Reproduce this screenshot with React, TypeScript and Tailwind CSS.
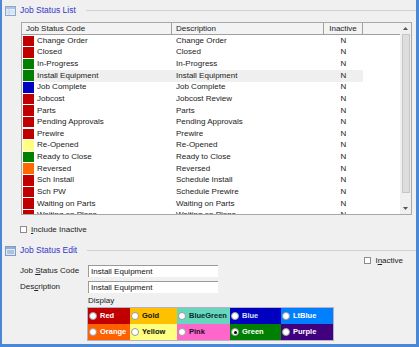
import React from "react";

type Row = { code: string; desc: string; color: string };

const rows: Row[] = [
  { code: "Change Order", desc: "Change Order", color: "bg-[#c00000]" },
  { code: "Closed", desc: "Closed", color: "bg-[#c00000]" },
  { code: "In-Progress", desc: "In-Progress", color: "bg-[#008000]" },
  { code: "Install Equipment", desc: "Install Equipment", color: "bg-[#008000]" },
  { code: "Job Complete", desc: "Job Complete", color: "bg-[#0000c0]" },
  { code: "Jobcost", desc: "Jobcost Review", color: "bg-[#c00000]" },
  { code: "Parts", desc: "Parts", color: "bg-[#c00000]" },
  { code: "Pending Approvals", desc: "Pending Approvals", color: "bg-[#c00000]" },
  { code: "Prewire", desc: "Prewire", color: "bg-[#c00000]" },
  { code: "Re-Opened", desc: "Re-Opened", color: "bg-[#ffff80]" },
  { code: "Ready to Close", desc: "Ready to Close", color: "bg-[#008000]" },
  { code: "Reversed", desc: "Reversed", color: "bg-[#ff6a00]" },
  { code: "Sch Install", desc: "Schedule Install", color: "bg-[#c00000]" },
  { code: "Sch PW", desc: "Schedule Prewire", color: "bg-[#c00000]" },
  { code: "Waiting on Parts", desc: "Waiting on Parts", color: "bg-[#c00000]" },
  { code: "Waiting on Plans", desc: "Waiting on Plans", color: "bg-[#c00000]" },
];

const swatches = [
  [
    { label: "Red", cls: "bg-[#c00000] text-white w-[42px]" },
    { label: "Gold", cls: "bg-[#ffc000] text-[#111] w-[47px]" },
    { label: "BlueGreen", cls: "bg-[#66d6bc] text-[#0a2a2a] w-[53px]" },
    { label: "Blue", cls: "bg-[#0000c0] text-[#d8e0ff] w-[51px]" },
    { label: "LtBlue", cls: "bg-[#0080ff] text-white w-[52px]" },
  ],
  [
    { label: "Orange", cls: "bg-[#ff6000] text-white w-[42px]" },
    { label: "Yellow", cls: "bg-[#ffff80] text-[#111] w-[47px]" },
    { label: "Pink", cls: "bg-[#ff66cc] text-[#111] w-[53px]" },
    { label: "Green", cls: "bg-[#008000] text-white w-[51px]", checked: true },
    { label: "Purple", cls: "bg-[#400080] text-white w-[52px]" },
  ],
];

function ListIcon() {
  return (
    <svg width="11" height="10" viewBox="0 0 11 10">
      <rect x="0.5" y="0.5" width="10" height="9" fill="#e8f0fa" stroke="#8aa8cc" />
      <rect x="1" y="1" width="9" height="2" fill="#a9c4e6" />
      <line x1="4" y1="3" x2="4" y2="9" stroke="#b8cce4" />
      <line x1="1" y1="5" x2="10" y2="5" stroke="#c8d8ec" />
      <line x1="1" y1="7" x2="10" y2="7" stroke="#c8d8ec" />
    </svg>
  );
}

function EditIcon() {
  return (
    <svg width="11" height="10" viewBox="0 0 11 10">
      <rect x="0.5" y="0.5" width="10" height="9" fill="#dfe9f6" stroke="#7d9cc6" />
      <rect x="1" y="1" width="9" height="2" fill="#8fb0dc" />
      <line x1="2" y1="5" x2="9" y2="5" stroke="#7d9cc6" />
      <line x1="2" y1="7" x2="9" y2="7" stroke="#7d9cc6" />
    </svg>
  );
}

function SectionHeader({ title, icon }: { title: string; icon: React.ReactNode }) {
  return (
    <div className="flex h-[21px] items-center pl-[3px]">
      {icon}
      <span className="ml-[4px] text-[8.5px] text-[#3434c8]">{title}</span>
      <div className="ml-[10px] h-px flex-1 bg-[#d2d2d2]" />
    </div>
  );
}

function CheckBox() {
  return <span className="inline-block h-[7px] w-[7px] border border-[#8c8c8c] bg-white" />;
}

export default function App() {
  return (
    <div className="h-[347px] w-[419px] overflow-hidden border-b-[3px] border-l-2 border-r-[3px] border-[#4a88d6] bg-[#f0f0f0] font-['Liberation_Sans',Arial,sans-serif] text-[8px] text-[#222]">
      <SectionHeader title="Job Status List" icon={<ListIcon />} />

      {/* grid */}
      <div className="ml-[19px] mt-px flex h-[193px] w-[391px] border border-[#a8a8a8] bg-white">
        <div className="flex-1 overflow-hidden">
          <div className="flex h-[12px] border-b border-[#a0a0a0] bg-[#f3f3f3] leading-[11px]">
            <div className="w-[150px] border-r border-[#a0a0a0] pl-[4px]">Job Status Code</div>
            <div className="w-[152px] border-r border-[#a0a0a0] pl-[4px]">Description</div>
            <div className="w-[39px] border-r border-[#a0a0a0] text-center">Inactive</div>
            <div className="flex-1" />
          </div>
          {rows.map((r) => (
            <div
              key={r.code}
              className={`flex h-[11.64px] items-center ${r.code === "Install Equipment" ? "w-[341px] bg-[#efefef]" : ""}`}
            >
              <div className="flex w-[150px] items-center">
                <span className={`ml-px h-[10.6px] w-[11px] ${r.color}`} />
                <span className="ml-[3px] whitespace-nowrap">{r.code}</span>
              </div>
              <div className="w-[152px] whitespace-nowrap pl-[4px]">{r.desc}</div>
              <div className="w-[39px] text-center">N</div>
            </div>
          ))}
        </div>
        {/* scrollbar */}
        <div className="flex w-[11px] flex-col items-center bg-[#f0f0f0]">
          <div className="flex h-[11px] items-center">
            <svg width="5" height="3" viewBox="0 0 5 3">
              <path d="M0 3 L2.5 0 L5 3 Z" fill="#555" />
            </svg>
          </div>
          <div className="h-[159px] w-[8px] border border-[#c6c6c6] bg-[#dedede]" />
          <div className="flex-1" />
          <div className="flex h-[11px] items-center">
            <svg width="5" height="3" viewBox="0 0 5 3">
              <path d="M0 0 L5 0 L2.5 3 Z" fill="#555" />
            </svg>
          </div>
        </div>
      </div>

      <div className="ml-[18px] mt-[10px] flex h-[9px] items-center gap-[4px]">
        <CheckBox />
        <span>
          <u>I</u>nclude Inactive
        </span>
      </div>

      <div className="mt-[6px]">
        <SectionHeader title="Job Status Edit" icon={<EditIcon />} />
      </div>

      <div className="flex">
        <div className="flex flex-col">
          <div className="mt-[4px] flex h-[12px] items-center">
            <span className="w-[86px] whitespace-nowrap pl-[18px]">
              Job <u>S</u>tatus Code
            </span>
            <div className="h-[12px] w-[130px] border-l border-t border-[#9a9a9a] bg-white pl-[2px] leading-[11px] text-[#111]">
              Install Equipment
            </div>
          </div>
          <div className="mt-[4px] flex h-[12px] items-center">
            <span className="w-[86px] pl-[18px]">
              Des<u>c</u>ription
            </span>
            <div className="h-[12px] w-[130px] border-l border-t border-[#9a9a9a] bg-white pl-[2px] leading-[11px] text-[#111]">
              Install Equipment
            </div>
          </div>
          <div className="ml-[86px] mt-[3px] leading-[10px]">Display</div>
          <div className="ml-[85px] mt-[1px] flex w-fit flex-col border border-[#b8b0c8]">
            {swatches.map((row, i) => (
              <div key={i} className="flex h-[16px]">
                {row.map((s) => (
                  <div
                    key={s.label}
                    className={`flex items-center overflow-hidden whitespace-nowrap pl-[1px] text-[7.5px] font-bold ${s.cls}`}
                  >
                    <span className="flex h-[8px] w-[8px] shrink-0 items-center justify-center rounded-full border border-[#9a9a9a] bg-white">
                      {s.checked && <span className="h-[3px] w-[3px] rounded-full bg-black" />}
                    </span>
                    <span className="ml-[3px]">{s.label}</span>
                  </div>
                ))}
              </div>
            ))}
          </div>
        </div>
        <div className="ml-auto mr-[13px] mt-[-5px] flex h-[9px] items-center gap-[4px]">
          <CheckBox />
          <span>
            I<u>n</u>active
          </span>
        </div>
      </div>
    </div>
  );
}
